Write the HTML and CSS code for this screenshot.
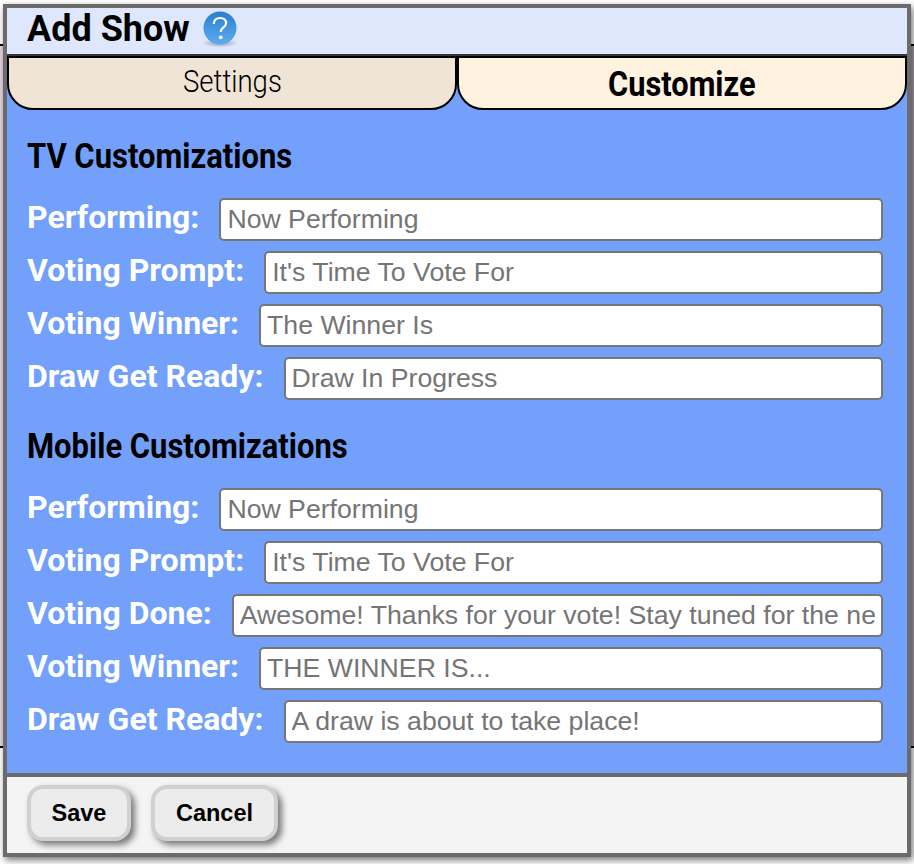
FILE: index.html
```html
<!DOCTYPE html>
<html lang="en">
<head>
<meta charset="utf-8">
<title>Add Show</title>
<link rel="stylesheet" href="styles.css">
</head>
<body>
<div class="backdrop">
  <div class="back-top"></div>
  <div class="back-mid"></div>
  <div class="back-bottom"></div>
</div>
<div class="dialog">
  <header class="title-bar">
    <h1 class="title">Add Show</h1>
    <svg class="help" width="36" height="38" viewBox="0 0 36 38" aria-hidden="true">
      <defs>
        <linearGradient id="ball" x1="0" y1="0" x2="0" y2="1">
          <stop offset="0" stop-color="#2a7fcf"/>
          <stop offset="1" stop-color="#5dacee"/>
        </linearGradient>
        <radialGradient id="shade" cx="0.5" cy="0.5" r="0.5">
          <stop offset="0" stop-color="#56657c" stop-opacity="0.6"/>
          <stop offset="1" stop-color="#56657c" stop-opacity="0"/>
        </radialGradient>
      </defs>
      <ellipse cx="18" cy="32" rx="18" ry="4.500" fill="url(#shade)"/>
      <circle cx="18" cy="17" r="16.500" fill="url(#ball)"/>
      <path d="M11.800 13c0-3.800 2.600-6 6.300-6 3.600 0 6 2.100 6 5.100 0 2.200-1.200 3.400-2.900 4.600-1.600 1.100-2.400 2-2.400 4.300" fill="none" stroke="#fff" stroke-width="2.200"/>
      <circle cx="18.700" cy="26.300" r="1.900" fill="#fff"/>
    </svg>
  </header>
  <nav class="tabs">
    <div class="tab tab-off"><span class="tab-text">Settings</span></div>
    <div class="tab tab-on"><span class="tab-text">Customize</span></div>
  </nav>
  <main class="content">
    <h2 class="section first"><span class="section-text">TV Customizations</span></h2>
    <div class="row"><label class="label">Performing:</label><input class="field" value="Now Performing"></div>
    <div class="row"><label class="label">Voting Prompt:</label><input class="field" value="It's Time To Vote For"></div>
    <div class="row"><label class="label">Voting Winner:</label><input class="field" value="The Winner Is"></div>
    <div class="row"><label class="label">Draw Get Ready:</label><input class="field" value="Draw In Progress"></div>
    <h2 class="section"><span class="section-text">Mobile Customizations</span></h2>
    <div class="row"><label class="label">Performing:</label><input class="field" value="Now Performing"></div>
    <div class="row"><label class="label">Voting Prompt:</label><input class="field" value="It's Time To Vote For"></div>
    <div class="row"><label class="label">Voting Done:</label><input class="field" value="Awesome! Thanks for your vote! Stay tuned for the next performance"></div>
    <div class="row"><label class="label">Voting Winner:</label><input class="field" value="THE WINNER IS..."></div>
    <div class="row"><label class="label">Draw Get Ready:</label><input class="field" value="A draw is about to take place!"></div>
  </main>
  <footer class="footer">
    <button class="btn save">Save</button>
    <button class="btn cancel">Cancel</button>
  </footer>
</div>
</body>
</html>
```
FILE: styles.css
```css
* { box-sizing: border-box; }
html, body { margin: 0; height: 100%; overflow: hidden; }
body { position: relative; width: 914px; height: 864px; background: #fff; font-family: Roboto, sans-serif; }
.backdrop { position: absolute; inset: 0; display: flex; flex-direction: column; }
.back-top { height: 44px; background: #fff; }
.back-mid { height: 704px; border-top: 2px solid #000; border-bottom: 2px solid #000; background: linear-gradient(90deg, #e8d5e4, #b0a2b2); }
.back-bottom { flex: 1; background: #fff; }
.dialog { position: absolute; left: 3px; top: 4px; width: 908px; height: 853px; border: 4px solid #6b6b6b; display: flex; flex-direction: column; box-shadow: 2px 3px 7px rgba(0,0,0,.55); background: #f4f4f4; }
.title-bar { height: 48px; flex: none; display: flex; align-items: center; padding-left: 20px; background: #dfe7fc; border-bottom: 2px solid #33363b; }
.title { margin: 0 0 5px; font: 700 36px/1 Roboto, sans-serif; color: #000; }
.help { margin: 0 0 2px 12px; }
.tabs { display: flex; flex: none; background: #72a0fb; }
.tab { width: 450px; height: 54px; border: 2px solid #000; border-radius: 0 0 26px 26px; text-align: center; color: #000; }
.tab-text { display: inline-block; }
.tab-off { background: #f0e4d6; font-weight: 300; font-size: 32px; line-height: 46px; }
.tab-off .tab-text { transform: scaleX(.86); }
.tab-on { background: #fff2df; font-weight: 700; font-size: 35px; line-height: 54px; }
.tab-on .tab-text { transform: scaleX(.88); }
.content { flex: 1; background: #72a0fb; padding: 5px 24px 0 20px; border-bottom: 4px solid #6b6b6b; }
.section { margin: 24px 0 19px; font: 700 35px/1 Roboto, sans-serif; color: #000; }
.section-text { display: inline-block; transform: scaleX(.885); transform-origin: left center; }
.row { display: flex; align-items: flex-start; height: 53px; padding-top: 5px; }
.label { font-weight: 700; font-size: 32px; line-height: 38px; color: #fff; margin-right: 20px; white-space: nowrap; }
.field { flex: 1; min-width: 0; height: 43px; border: 2px solid #767676; border-radius: 5px; background: #fff; padding: 0 6px 1px; font: 26.67px "Liberation Sans", sans-serif; color: #757575; }
.footer { flex: none; height: 76px; display: flex; align-items: flex-start; padding: 8px 20px 0; gap: 20px; background: #f4f4f4; }
.btn { height: 56px; border: 4px solid #d0d0d0; border-radius: 16px; background: #ececec; font: 700 23.5px "Liberation Sans", sans-serif; color: #000; box-shadow: 4px 4px 6px rgba(0,0,0,.5); }
.save { width: 104px; }
.cancel { width: 127px; }
```
